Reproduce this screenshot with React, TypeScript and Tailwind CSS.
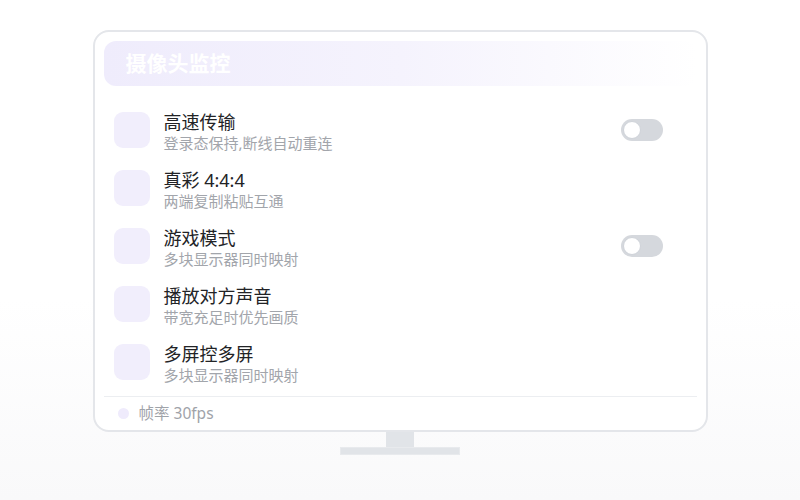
import { useState } from "react";

type Feature = {
    title: string;
    desc: string;
    toggle?: boolean;
};

const features: Feature[] = [
    { title: "高速传输", desc: "登录态保持,断线自动重连", toggle: true },
    { title: "真彩 4:4:4", desc: "两端复制粘贴互通" },
    { title: "游戏模式", desc: "多块显示器同时映射", toggle: true },
    { title: "播放对方声音", desc: "带宽充足时优先画质" },
    { title: "多屏控多屏", desc: "多块显示器同时映射" },
];

function Toggle({ on, onChange }: { on: boolean; onChange: () => void }) {
    return (
        <button
            onClick={onChange}
            className={`relative w-[42px] h-[22px] rounded-full flex items-center px-[2px] ${on ? "bg-[#a78bfa] justify-end" : "bg-[#d5d8dd] justify-start"}`}
        >
            <span className="w-[18px] h-[18px] rounded-full bg-white border border-[#cfd3d9]" />
        </button>
    );
}

export default function App() {
    const [toggles, setToggles] = useState<Record<number, boolean>>({});

    return (
        <div
            className="w-[800px] h-[500px] flex flex-col items-center pt-[30px] bg-gradient-to-b from-white from-60% to-[#f9f9fa]"
            style={{ fontFamily: '"Noto Sans", "Noto Sans CJK SC", sans-serif' }}
        >
            {/* Monitor */}
            <div className="w-[615px] h-[402px] border-2 border-[#e4e6ea] rounded-[16px] bg-white p-[9px] pb-0 flex flex-col">
                <div className="h-[45px] rounded-[12px] bg-gradient-to-r from-[#efecfc] via-[#f5f3fd] to-white flex items-center px-[22px]">
                    <span className="text-white text-[21px] font-bold">摄像头监控</span>
                </div>

                <div className="mt-[26px] pl-[10px] pr-[34px] flex flex-col gap-[22px]">
                    {features.map((f, i) => (
                        <div key={i} className="h-[36px] flex items-center">
                            <div className="w-[36px] h-[36px] rounded-[9px] bg-[#f1eefc] shrink-0" />
                            <div className="ml-[14px] self-start -mt-[1px] flex flex-col flex-1">
                                <span className="text-[18px] leading-[22px] text-[#222326]">{f.title}</span>
                                <span className="text-[15px] leading-[20px] text-[#a2a5ab]">{f.desc}</span>
                            </div>
                            {f.toggle && (
                                <Toggle
                                    on={!!toggles[i]}
                                    onChange={() => setToggles(t => ({ ...t, [i]: !t[i] }))}
                                />
                            )}
                        </div>
                    ))}
                </div>

                <div className="mt-[16px] border-t border-[#eceef1] h-[34px] flex items-center pl-[14px] gap-[10px]">
                    <span className="w-[11px] h-[11px] rounded-full bg-[#efebfc]" />
                    <span className="text-[15.5px] text-[#9fa3a9]">帧率 30fps</span>
                </div>
            </div>

            {/* Stand */}
            <div className="w-[28px] h-[15px] bg-[#e1e4e8]" />
            <div className="w-[120px] h-[8px] bg-[#e1e4e8] border border-[#e8eaed]" />
        </div>
    );
}
